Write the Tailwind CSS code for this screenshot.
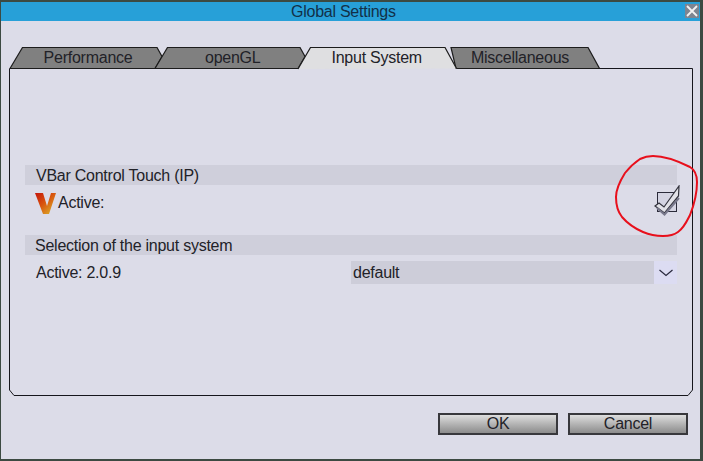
<!DOCTYPE html>
<html><head><meta charset="utf-8"><script src="https://cdn.jsdelivr.net/npm/@tailwindcss/browser@4"></script></head>
<body class="bg-[#3c4a42] font-['Liberation_Sans',Arial,sans-serif] text-[16px] tracking-[-0.25px] text-[#222228]">
<div class="relative w-[703px] h-[461px] overflow-hidden">
  <div class="absolute left-[1px] top-[2px] w-[699px] h-[457px] bg-[#dcdce8] flex flex-col">
    <div class="h-[19px] bg-[#27a0d8] flex items-center relative text-[#123048] shrink-0">
      <span class="ml-[290px] whitespace-nowrap">Global Settings</span>
      <div class="absolute left-[684px] top-[2px] w-[14px] h-[14px] bg-[#7e8590] flex items-center justify-center">
        <svg width="12" height="12" viewBox="0 0 12 12"><path d="M1 1L11 11M11 1L1 11" stroke="#f2f2f2" stroke-width="1.8"/></svg>
      </div>
    </div>
    <div class="relative mt-[26px] ml-[8px] w-[684px] h-[349px]">
      <svg class="absolute left-0 top-0" width="684" height="349" viewBox="9 47 684 349" fill="none">
        <path d="M10 68.5L22.5 47.5H157L162 56.5L155 68.5Z" fill="#808080" stroke="#1c1c1c" stroke-width="1.2"/>
        <path d="M155 68.5L167.5 47.5H300L305 56.5L298 68.5Z" fill="#808080" stroke="#1c1c1c" stroke-width="1.2"/>
        <path d="M451 47.5H588L599.5 68.5H456Z" fill="#808080" stroke="#1c1c1c" stroke-width="1.2"/>
        <path d="M298 69L310.5 47.5H445L456.5 68.5" fill="#dfdfe1" stroke="#1c1c1c" stroke-width="1.2"/>
        <path d="M599 68.5H692.5V390L688 395.5H14L9.5 390V69L10 68.5" stroke="#16161c" stroke-width="1"/>
      </svg>
      <div class="absolute left-0 top-0 h-[22px] w-full flex items-center whitespace-nowrap">
        <span class="ml-[34px] w-[90px] shrink-0 text-center leading-[22px]">Performance</span>
        <span class="ml-[72px] w-[55px] shrink-0 text-center leading-[22px]">openGL</span>
        <span class="ml-[71.5px] w-[90px] shrink-0 text-center leading-[22px]">Input System</span>
        <span class="ml-[48.5px] w-[100px] shrink-0 text-center leading-[22px]">Miscellaneous</span>
      </div>
      <div class="absolute left-[16px] top-[118px] w-[652px] flex flex-col">
        <div class="h-[20px] bg-[#cfcfdb] pl-[11px] leading-[22px]">VBar Control Touch (IP)</div>
        <div class="h-[34px] flex items-center relative">
          <svg class="ml-[10px] mt-[2px] shrink-0" width="21" height="21" viewBox="0 0 21 21">
            <defs><linearGradient id="v" x1="0" y1="0" x2="1" y2="1"><stop offset="0" stop-color="#c4140c"/><stop offset="0.45" stop-color="#d8540e"/><stop offset="1" stop-color="#dcc030"/></linearGradient></defs>
            <path d="M0 0H8L12 13L16 0H21L14 21H8Z" fill="url(#v)"/>
          </svg>
          <span class="ml-[2px] pt-[2px]">Active:</span>
          <div class="absolute left-[632px] top-[7px] w-[20px] h-[20px] border border-[#2b2b3a] bg-[#d4d4e2]"></div>
          <svg class="absolute left-[625px] top-0" width="32" height="32" viewBox="0 0 32 32">
            <path d="M5 21L9 18L14 22L29 1L28.5 11L14.5 28Z" fill="#e2e2e8" stroke="#33333d" stroke-width="1.2"/>
            <path d="M7 23L14.5 29.5L29 13" stroke="#77778a" stroke-width="2" fill="none"/>
          </svg>
        </div>
        <div class="mt-[16px] h-[20px] bg-[#cfcfdb] pl-[10px] leading-[22px]">Selection of the input system</div>
        <div class="mt-[6px] h-[23px] flex items-center">
          <span class="pl-[11px] w-[326px]">Active: 2.0.9</span>
          <div class="w-[303px] h-[23px] bg-[#cdcdd9] pl-[2px] leading-[23px]">default</div>
          <div class="w-[23px] h-[23px] bg-[#dcdcf2] flex items-center justify-center">
            <svg width="16" height="8" viewBox="0 0 16 8" fill="none"><path d="M1.5 1L8 6.5L14.5 1" stroke="#28283c" stroke-width="1.2"/></svg>
          </div>
        </div>
      </div>
    </div>
    <div class="flex justify-end gap-[10px] mt-[17px] pr-[12px]">
      <div class="w-[120px] h-[22px] border-2 border-[#38383c] bg-gradient-to-b from-[#dedede] to-[#8c8c8c] flex items-center justify-center">OK</div>
      <div class="w-[120px] h-[22px] border-2 border-[#38383c] bg-gradient-to-b from-[#dedede] to-[#8c8c8c] flex items-center justify-center">Cancel</div>
    </div>
  </div>
  <svg class="absolute left-0 top-0 pointer-events-none" width="703" height="461" viewBox="0 0 703 461" fill="none">
    <path d="M653 156C647 156 644 157 640 159C634 163 629 168 625 173C620 181 616 189 616 197C616 205 618 212 622 217C628 224 636 229 643 232C650 235 656 236 663 236C670 236 674 235 678 232C684 228 687 221 690 215C694 205 697 194 697 182C697 175 695 170 690 167C680 162 665 156 653 156Z" stroke="#e8101c" stroke-width="2"/>
  </svg>
</div>
</body></html>
